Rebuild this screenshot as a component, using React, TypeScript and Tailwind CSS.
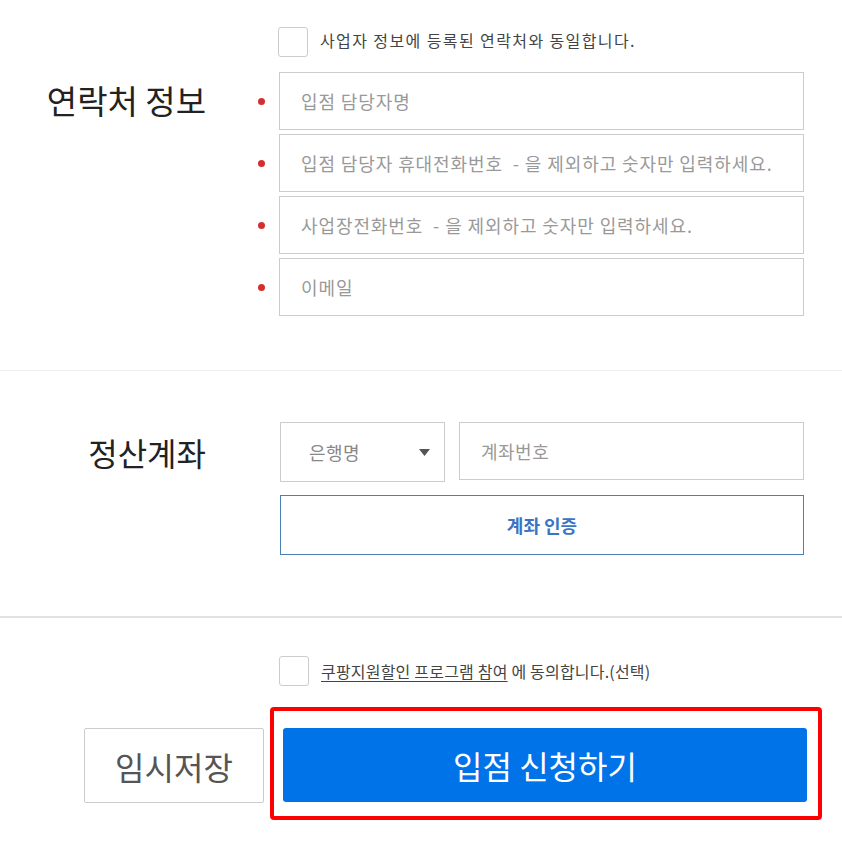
import React from "react";

const font = { fontFamily: '"Noto Sans CJK KR", "Noto Sans", sans-serif' };

function Dot() {
  return <span className="block w-[7px] h-[7px] rounded-full bg-[#d32f2f]" />;
}

function Checkbox() {
  return <span className="shrink-0 w-[30px] h-[30px] rounded-[3px] border border-[#ccc] bg-white" />;
}

export default function App() {
  const contacts = [
    "입점 담당자명",
    "입점 담당자 휴대전화번호  - 을 제외하고 숫자만 입력하세요.",
    "사업장전화번호  - 을 제외하고 숫자만 입력하세요.",
    "이메일",
  ];

  return (
    <div className="w-[842px] bg-white text-[#333]" style={font}>
      {/* 연락처 정보 */}
      <section className="pt-[27px] pb-[54px] border-b border-[#eee]">
        <div className="flex items-center ml-[278px] h-[30px]">
          <Checkbox />
          <span className="ml-[12px] text-[16px] tracking-[1.4px] text-[#444] -mt-[4px]">
            사업자 정보에 등록된 연락처와 동일합니다.
          </span>
        </div>
        <div className="flex mt-[15px]">
          <div className="w-[206px] h-[58px] flex items-center justify-end text-[33px] text-[#222] whitespace-nowrap">
            연락처 정보
          </div>
          <div className="flex flex-col gap-[4px]">
            {contacts.map((p) => (
              <div key={p} className="flex items-center">
                <div className="w-[73px] pl-[52px]">
                  <Dot />
                </div>
                <input
                  className="w-[525px] h-[58px] border border-[#ccc] px-[21px] text-[18px] tracking-[0.9px] outline-none placeholder:text-[#999]"
                  placeholder={p}
                />
              </div>
            ))}
          </div>
        </div>
      </section>

      {/* 정산계좌 */}
      <section className="pt-[51px] pb-[61px] border-b-2 border-[#e2e2e2]">
        <div className="flex">
          <div className="w-[206px] h-[60px] flex items-center justify-end text-[32px] text-[#222]">
            정산계좌
          </div>
          <div className="ml-[74px] w-[524px] flex flex-col gap-[13px]">
            <div className="flex gap-[14px]">
              <div className="w-[165px] h-[60px] border border-[#ccc] flex items-center justify-between pl-[28px] pr-[14px]">
                <span className="text-[18px] tracking-[0.5px] text-[#888]">은행명</span>
                <svg width="11" height="7" viewBox="0 0 11 7">
                  <path d="M0 0 H11 L5.5 7 Z" fill="#555" />
                </svg>
              </div>
              <input
                className="flex-1 h-[58px] border border-[#ccc] px-[21px] text-[18px] tracking-[0.5px] outline-none placeholder:text-[#999]"
                placeholder="계좌번호"
              />
            </div>
            <button className="h-[60px] border border-[#4a7fb8] text-[18px] font-bold text-[#3c74c4] bg-white">
              계좌 인증
            </button>
          </div>
        </div>
      </section>

      {/* 동의 및 신청 */}
      <section className="pt-[38px] pb-[25px]">
        <div className="flex items-center ml-[279px] h-[30px]">
          <Checkbox />
          <span className="ml-[12px] text-[16px] tracking-[0.2px] text-[#444]">
            <span className="underline underline-offset-[3px]">쿠팡지원할인 프로그램 참여</span> 에 동의합니다.(선택)
          </span>
        </div>
        <div className="flex items-start mt-[21px]">
          <button className="ml-[84px] mt-[21px] w-[180px] h-[75px] border border-[#ccc] rounded-[2px] bg-white text-[32px] text-[#555]">
            임시저장
          </button>
          <div className="ml-[6px] border-[4px] border-[#f00] rounded-[4px] pt-[17px] pb-[14px] pl-[9px] pr-[11px]">
            <button className="w-[524px] h-[74px] rounded-[3px] bg-[#0073e9] text-white text-[32px]">
              입점 신청하기
            </button>
          </div>
        </div>
      </section>
    </div>
  );
}
